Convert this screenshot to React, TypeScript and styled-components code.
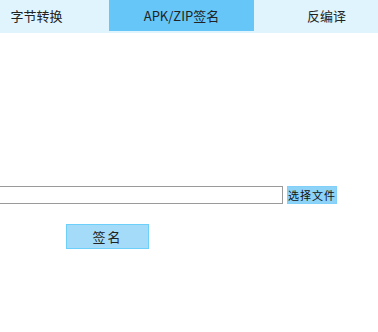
import styled, { createGlobalStyle } from "styled-components";

const GlobalStyle = createGlobalStyle`
  html, body {
    margin: 0;
    padding: 0;
    background: #ffffff;
    font-family: "Noto Sans CJK SC", "DejaVu Sans", sans-serif;
  }
`;

const tabs = ["字节转换", "APK/ZIP签名", "反编译"];

const App = () => {
  return (
    <Page>
      <GlobalStyle />
      <TabBar>
        <TabTrack>
          {tabs.map((t, i) => (
            <Tab key={t} $active={i === 1}>
              {t}
            </Tab>
          ))}
        </TabTrack>
      </TabBar>
      <Body>
        <FileRow>
          <PathInput type="text" readOnly />
          <PickButton>选择文件</PickButton>
        </FileRow>
        <SignButton>签名</SignButton>
      </Body>
    </Page>
  );
};

export default App;

const Page = styled.div`
  width: 378px;
  height: 332px;
  overflow: hidden;
  background: #fff;
`;

const TabBar = styled.div`
  height: 33px;
  background: #dff4fd;
  overflow: hidden;
`;

const TabTrack = styled.div`
  display: flex;
  margin-left: -36px;
`;

const Tab = styled.div<{ $active?: boolean }>`
  flex: 0 0 145px;
  height: 31px;
  display: flex;
  align-items: center;
  justify-content: center;
  font-size: 13px;
  color: #222;
  background: ${({ $active }) => ($active ? "#66c6f8" : "transparent")};
`;

const Body = styled.div`
  display: flex;
  flex-direction: column;
  padding-top: 153px;
`;

const FileRow = styled.div`
  display: flex;
  align-items: flex-start;
  gap: 4px;
  margin-left: -20px;
`;

const PathInput = styled.input`
  box-sizing: border-box;
  width: 303px;
  height: 18px;
  margin: 0;
  padding: 0;
  border: 1px solid #9a9a9a;
  background: #fff;
  outline: none;
`;

const PickButton = styled.button`
  box-sizing: border-box;
  width: 50px;
  height: 18px;
  margin: 0;
  padding: 0;
  border: 1px solid #80d0fa;
  background: #8dd3f8;
  color: #111;
  font-family: "Noto Sans CJK SC", sans-serif;
  font-size: 11px;
  line-height: 16px;
  letter-spacing: 1px;
`;

const SignButton = styled.button`
  box-sizing: border-box;
  width: 83px;
  height: 25px;
  margin: 20px 0 0 66px;
  padding: 0;
  border: 1px solid #6cd0fb;
  background: #a4dbf8;
  color: #222;
  font-family: "Noto Sans CJK SC", sans-serif;
  font-size: 13px;
  letter-spacing: 2px;
`;
